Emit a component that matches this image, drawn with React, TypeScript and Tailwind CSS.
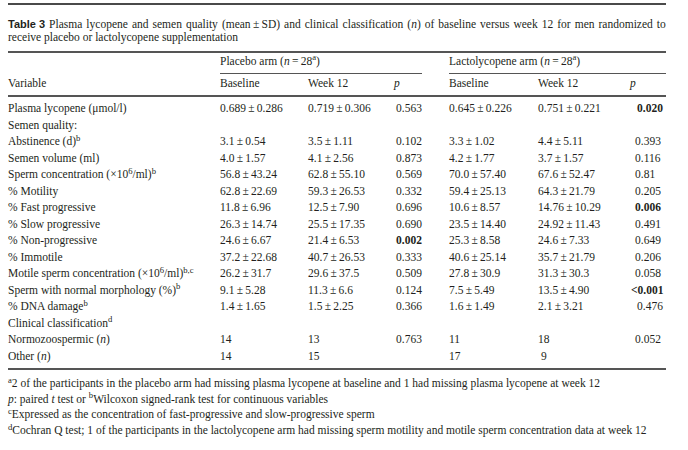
const cols = "grid grid-cols-[212px_88px_88px_53px_89px_97px_31px]";

type Cell = string | { v: string; bold?: boolean; cls?: string };

interface Row {
  label: React.ReactNode;
  cells?: Cell[];
}

const pm = (a: string, b: string) => `${a}\u2009±\u2009${b}`;

const rows: Row[] = [
  {
    label: "Plasma lycopene (μmol/l)",
    cells: [pm("0.689", "0.286"), pm("0.719", "0.306"), "0.563", pm("0.645", "0.226"), pm("0.751", "0.221"), { v: "0.020", bold: true, cls: "pl-[2px]" }],
  },
  { label: "Semen quality:" },
  {
    label: <>Abstinence (d)<sup>b</sup></>,
    cells: [pm("3.1", "0.54"), pm("3.5", "1.11"), "0.102", pm("3.3", "1.02"), pm("4.4", "5.11"), "0.393"],
  },
  {
    label: "Semen volume (ml)",
    cells: [pm("4.0", "1.57"), pm("4.1", "2.56"), "0.873", pm("4.2", "1.77"), pm("3.7", "1.57"), "0.116"],
  },
  {
    label: <>Sperm concentration (×10<sup>6</sup>/ml)<sup>b</sup></>,
    cells: [pm("56.8", "43.24"), pm("62.8", "55.10"), "0.569", pm("70.0", "57.40"), pm("67.6", "52.47"), "0.81"],
  },
  {
    label: "% Motility",
    cells: [pm("62.8", "22.69"), pm("59.3", "26.53"), "0.332", pm("59.4", "25.13"), pm("64.3", "21.79"), "0.205"],
  },
  {
    label: "% Fast progressive",
    cells: [pm("11.8", "6.96"), pm("12.5", "7.90"), "0.696", pm("10.6", "8.57"), pm("14.76", "10.29"), { v: "0.006", bold: true }],
  },
  {
    label: "% Slow progressive",
    cells: [pm("26.3", "14.74"), pm("25.5", "17.35"), "0.690", pm("23.5", "14.40"), pm("24.92", "11.43"), "0.491"],
  },
  {
    label: "% Non-progressive",
    cells: [pm("24.6", "6.67"), pm("21.4", "6.53"), { v: "0.002", bold: true }, pm("25.3", "8.58"), pm("24.6", "7.33"), "0.649"],
  },
  {
    label: "% Immotile",
    cells: [pm("37.2", "22.68"), pm("40.7", "26.53"), "0.333", pm("40.6", "25.14"), pm("35.7", "21.79"), "0.206"],
  },
  {
    label: <>Motile sperm concentration (×10<sup>6</sup>/ml)<sup>b,c</sup></>,
    cells: [pm("26.2", "31.7"), pm("29.6", "37.5"), "0.509", pm("27.8", "30.9"), pm("31.3", "30.3"), "0.058"],
  },
  {
    label: <>Sperm with normal morphology (%)<sup>b</sup></>,
    cells: [pm("9.1", "5.28"), pm("11.3", "6.6"), "0.124", pm("7.5", "5.49"), pm("13.5", "4.90"), { v: "<0.001", bold: true, cls: "-ml-[4px]" }],
  },
  {
    label: <>% DNA damage<sup>b</sup></>,
    cells: [pm("1.4", "1.65"), pm("1.5", "2.25"), "0.366", pm("1.6", "1.49"), pm("2.1", "3.21"), { v: "0.476", cls: "pl-[2px]" }],
  },
  { label: <>Clinical classification<sup>d</sup></> },
  {
    label: <>Normozoospermic (<i>n</i>)</>,
    cells: ["14", "13", "0.763", "11", "18", "0.052"],
  },
  {
    label: <>Other (<i>n</i>)</>,
    cells: ["14", "15", "", "17", { v: "9", cls: "pl-[3px]" }, ""],
  },
];

function DataRow({ row }: { row: Row }) {
  return (
    <div className={`${cols} h-[16.5px] leading-[16.5px]`}>
      <div className="whitespace-nowrap">{row.label}</div>
      {(row.cells ?? []).map((c, i) => {
        const cell = typeof c === "string" ? { v: c } : c;
        return (
          <div key={i} className={`whitespace-nowrap ${cell.bold ? "font-bold" : ""} ${cell.cls ?? ""}`}>
            {cell.v}
          </div>
        );
      })}
    </div>
  );
}

export default function App() {
  return (
    <div className="w-[688px] h-[450px] bg-white pt-[3px] px-2 text-[11.5px] text-[#231f20] font-['Liberation_Serif',serif] overflow-hidden">
      <div className="w-[658px]">
        <div className="h-[2px] bg-[#4a4a4a]" />

        {/* caption */}
        <div className="pt-[12.5px] pb-[7.5px] leading-[13px]">
          <div className="text-justify [text-align-last:justify] whitespace-nowrap flex justify-between">
            <span className="font-['Liberation_Sans',sans-serif] font-bold text-[11px]">Table 3</span>
            {"Plasma lycopene and semen quality (mean\u2009±\u2009SD) and clinical classification (n) of baseline versus week 12 for men randomized to"
              .split(" ")
              .map((w, i) =>
                w === "(n)" ? (
                  <span key={i}>(<i>n</i>)</span>
                ) : (
                  <span key={i}>{w}</span>
                )
              )}
          </div>
          <div>receive placebo or lactolycopene supplementation</div>
        </div>

        <div className="h-[2px] bg-[#555]" />

        {/* header */}
        <div className={`${cols} leading-[16.5px]`}>
          <div />
          <div className="col-span-3">
            <div className="w-[202px] border-b border-[#555] pb-[3.5px] -mt-[0.5px]">
              Placebo arm (<i>n</i>{"\u2009=\u2009"}28<sup>a</sup>)
            </div>
          </div>
          <div className="col-span-3">
            <div className="border-b border-[#555] pb-[3.5px] -mt-[0.5px]">
              Lactolycopene arm (<i>n</i>{"\u2009=\u2009"}28<sup>a</sup>)
            </div>
          </div>
        </div>
        <div className={`${cols} leading-[16.5px] pt-[1.5px] pb-[3px]`}>
          <div>Variable</div>
          <div>Baseline</div>
          <div>Week 12</div>
          <div className="-ml-[2px]"><i>p</i></div>
          <div>Baseline</div>
          <div>Week 12</div>
          <div className="-ml-[5px]"><i>p</i></div>
        </div>
        <div className="h-[2px] bg-[#555]" />

        {/* body */}
        <div className="pt-[3.5px] pb-[3.5px]">
          {rows.map((r, i) => (
            <DataRow key={i} row={r} />
          ))}
        </div>
        <div className="h-[2px] bg-[#555]" />

        {/* footnotes */}
        <div className="pt-[6.5px] leading-[15.7px] whitespace-nowrap">
          <div>
            <sup>a</sup>2 of the participants in the placebo arm had missing plasma lycopene at baseline and 1 had missing plasma lycopene at week 12
          </div>
          <div>
            <i>p</i>: paired <i>t</i> test or <sup>b</sup>Wilcoxon signed-rank test for continuous variables
          </div>
          <div>
            <sup>c</sup>Expressed as the concentration of fast-progressive and slow-progressive sperm
          </div>
          <div>
            <sup>d</sup>Cochran Q test; 1 of the participants in the lactolycopene arm had missing sperm motility and motile sperm concentration data at week 12
          </div>
        </div>
      </div>
    </div>
  );
}
